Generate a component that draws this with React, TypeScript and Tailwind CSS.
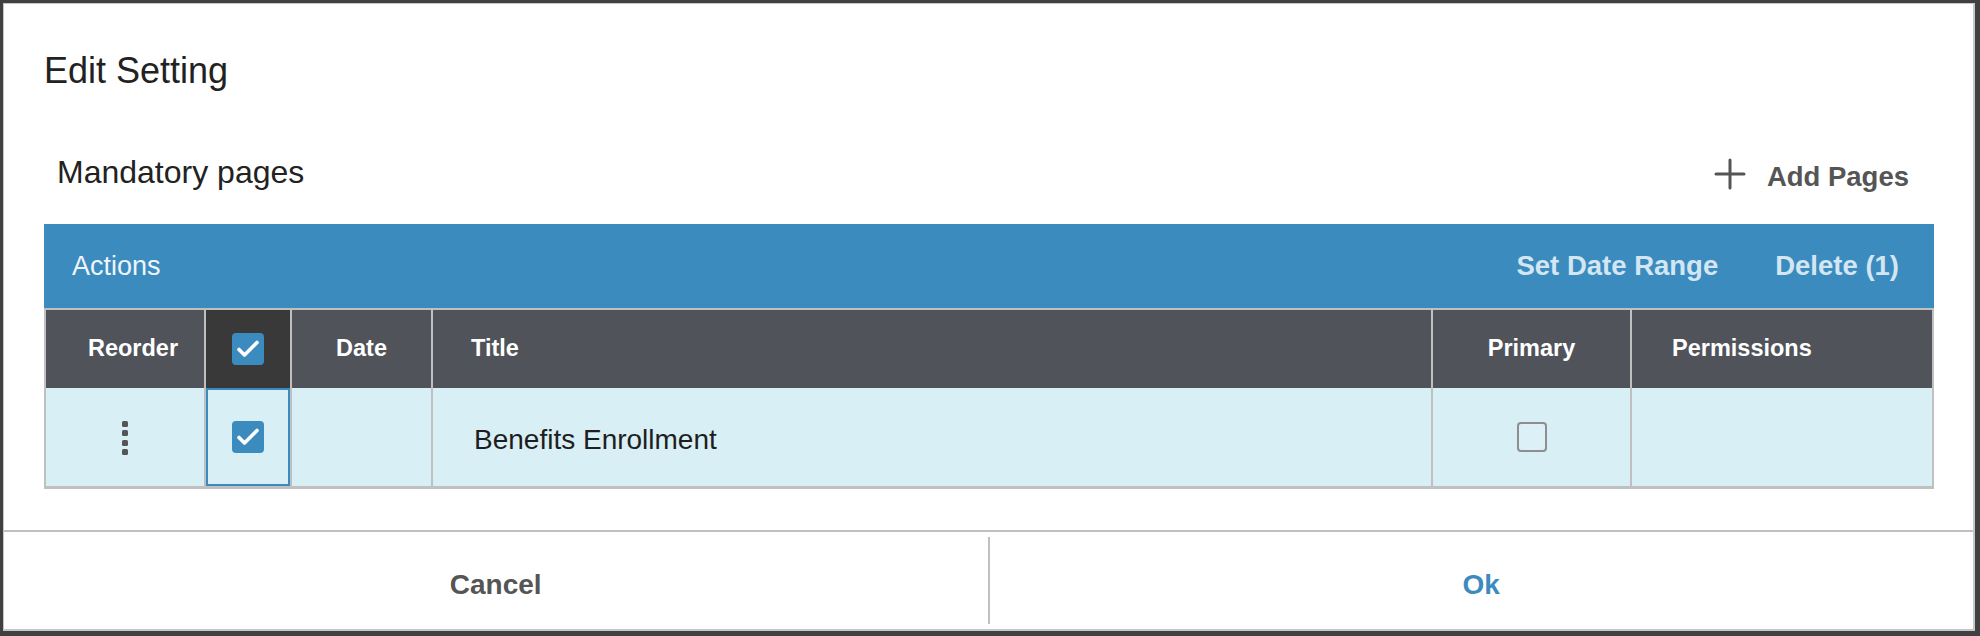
import React from "react";

const Check = ({ on }: { on: boolean }) =>
  on ? (
    <div className="flex size-[32px] items-center justify-center rounded-[4px] bg-[#3c8bbf]">
      <svg width="32" height="32" viewBox="0 0 32 32" fill="none">
        <path d="M7 16.5l5.5 5.5L25 9.5" stroke="white" strokeWidth="3.6" strokeLinecap="round" strokeLinejoin="round" />
      </svg>
    </div>
  ) : (
    <div className="size-[30px] rounded-[4px] border-2 border-[#8e8e8e] bg-[#dcf1f7]" />
  );

const App = () => {
  return (
    <div className="h-[636px] w-[1980px] bg-[#404040] pl-[3px] pt-[3px] font-['Liberation_Sans',Arial,sans-serif]">
      <div className="flex h-[628px] w-[1972px] flex-col border border-r-2 border-b-2 border-[#c6c6c6] bg-white">
        {/* header */}
        <div className="px-10">
          <div className="mt-[37px] flex h-[60px] items-center text-[36px] leading-none text-[#222]">
            Edit Setting
          </div>
          <div className="mt-[29px] flex h-[84px] w-[1890px] items-center justify-between pl-[13px] pr-[25px]">
            <span className="text-[32px] leading-none text-[#222]">Mandatory pages</span>
            <button className="flex items-center gap-[21px] text-[#555]">
              <svg className="mt-[3px]" width="32" height="32" viewBox="0 0 32 32" fill="none">
                <path d="M16 2v28M2 16h28" stroke="#555" strokeWidth="3" strokeLinecap="round" />
              </svg>
              <span className="pt-[10px] text-[27.5px] font-bold leading-none">Add Pages</span>
            </button>
          </div>

          {/* table */}
          <div className="mt-[10px] w-[1890px]">
            <div className="flex h-[84px] items-center justify-between bg-[#3c8bbf] pl-[28px] pr-[35px]">
              <span className="text-[27px] leading-none text-[#eef5fa]">Actions</span>
              <div className="flex gap-[57px] text-[27.5px] font-bold leading-none text-[#d4e6f2]">
                <span>Set Date Range</span>
                <span>Delete (1)</span>
              </div>
            </div>
            <div className="border-x-2 border-t-2 border-b-[3px] border-[#c0c0c0]">
              <div className="flex h-[78px] bg-[#50535a] text-[23.5px] font-bold text-white">
                <div className="flex w-[160px] items-center justify-center border-r-2 border-[#c0c0c0] pl-4">Reorder</div>
                <div className="flex w-[86px] items-center justify-center border-r-2 border-[#c0c0c0] bg-[#393939]">
                  <Check on />
                </div>
                <div className="flex w-[141px] items-center justify-center border-r-2 border-[#c0c0c0]">Date</div>
                <div className="flex w-[1000px] items-center border-r-2 border-[#c0c0c0] pl-[38px]">Title</div>
                <div className="flex w-[199px] items-center justify-center border-r-2 border-[#c0c0c0]">Primary</div>
                <div className="flex w-[300px] items-center pl-[40px]">Permissions</div>
              </div>
              <div className="flex h-[98px] bg-[#d8eff5] text-[28px] text-[#1e1e1e]">
                <div className="flex w-[160px] items-center justify-center border-r-2 border-[#c0c0c0]">
                  <div className="flex flex-col gap-[3.5px] pt-[2px]">
                    <span className="size-[6px] rounded-[1.5px] bg-[#555]" />
                    <span className="size-[6px] rounded-[1.5px] bg-[#555]" />
                    <span className="size-[6px] rounded-[1.5px] bg-[#555]" />
                    <span className="size-[6px] rounded-[1.5px] bg-[#555]" />
                  </div>
                </div>
                <div className="flex w-[86px] items-center justify-center border-r-2 border-[#c0c0c0] ring-2 ring-inset ring-[#3c8bbf]">
                  <Check on />
                </div>
                <div className="w-[141px] border-r-2 border-[#c0c0c0]" />
                <div className="flex w-[1000px] items-center border-r-2 border-[#c0c0c0] pl-[41px] pt-[6px]">Benefits Enrollment</div>
                <div className="flex w-[199px] items-center justify-center border-r-2 border-[#c0c0c0]">
                  <Check on={false} />
                </div>
                <div className="w-[300px]" />
              </div>
            </div>
          </div>
        </div>

        {/* footer */}
        <div className="mt-auto flex h-[99px] border-t-2 border-[#c0c0c0] text-[28px] font-bold">
          <button className="flex flex-1 items-center justify-center pt-2 text-[#555]">Cancel</button>
          <div className="my-[5px] w-[2px] bg-[#c0c0c0]" />
          <button className="flex flex-1 items-center justify-center pt-2 text-[#3c8bbf]">Ok</button>
        </div>
      </div>
    </div>
  );
};

export default App;
